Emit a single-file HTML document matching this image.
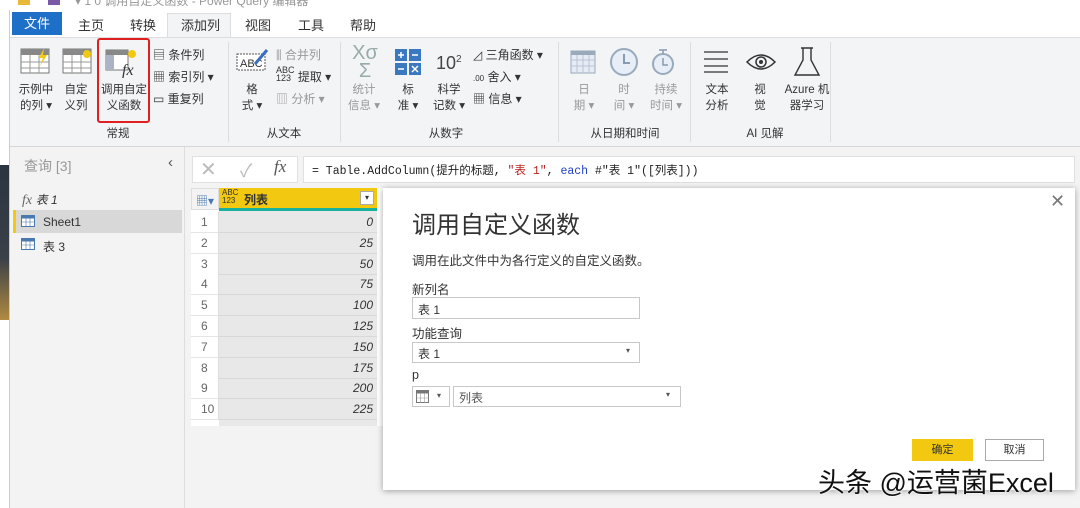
<!DOCTYPE html>
<html><head><meta charset="utf-8"><style>
*{margin:0;padding:0;box-sizing:border-box}
body{width:1080px;height:508px;overflow:hidden;background:#f3f3f3;font-family:"Liberation Sans","Noto Sans CJK SC",sans-serif;position:relative;color:#333}
.a{position:absolute}
.t{font-size:12px;color:#333;white-space:nowrap}
.g{color:#999}
.lbl{font-size:11.5px;text-align:center;line-height:16px;white-space:nowrap}
</style></head><body>
<div class="a" style="left:0;top:0;width:1080px;height:10px;background:#fff"></div>
<div class="a" style="left:18px;top:0;width:12px;height:5px;background:#e6b93a"></div>
<div class="a" style="left:48px;top:0;width:12px;height:5px;background:#7a5aa6"></div>
<div class="a t" style="left:75px;top:-8px;color:#999;font-size:12px">▾ 1 0 调用自定义函数 - Power Query 编辑器</div>
<div class="a" style="left:10px;top:10px;width:1070px;height:27px;background:#fff"></div>
<div class="a" style="left:12px;top:12px;width:50px;height:23px;background:#1e6fc8;color:#fff;font-size:13px;text-align:center;line-height:23px">文件</div>
<div class="a t" style="left:78px;top:15px;font-size:13px">主页</div>
<div class="a t" style="left:130px;top:15px;font-size:13px">转换</div>
<div class="a" style="left:167px;top:13px;width:64px;height:26px;background:#f3f4f6;border:1px solid #ddd;border-bottom:none"></div>
<div class="a t" style="left:181px;top:15px;font-size:13px">添加列</div>
<div class="a t" style="left:245px;top:15px;font-size:13px">视图</div>
<div class="a t" style="left:298px;top:15px;font-size:13px">工具</div>
<div class="a t" style="left:350px;top:15px;font-size:13px">帮助</div>
<div class="a" style="left:0;top:10px;width:10px;height:498px;background:#fff;border-right:1px solid #ccc"></div>
<div class="a" style="left:0;top:165px;width:9px;height:155px;background:linear-gradient(#2a3540,#3a4048 60%,#b08a40)"></div>
<div class="a" style="left:10px;top:37px;width:1070px;height:110px;background:#f3f4f6;border-top:1px solid #ddd;border-bottom:1px solid #d6d6d6"></div>
<div class="a" style="left:228px;top:42px;width:1px;height:100px;background:#ddd"></div>
<div class="a" style="left:340px;top:42px;width:1px;height:100px;background:#ddd"></div>
<div class="a" style="left:558px;top:42px;width:1px;height:100px;background:#ddd"></div>
<div class="a" style="left:690px;top:42px;width:1px;height:100px;background:#ddd"></div>
<div class="a" style="left:830px;top:42px;width:1px;height:100px;background:#ddd"></div>
<svg class="a" style="left:20px;top:48px" width="32" height="28"><rect x="1" y="1" width="28" height="24" fill="#fff" stroke="#777"/><rect x="1" y="1" width="28" height="6" fill="#888"/><path d="M10 7v18M19 7v18M1 14h28M1 20h28" stroke="#999"/><path d="M24 0l-5 10h4l-3 8 7-11h-4z" fill="#f2c811"/></svg>
<svg class="a" style="left:62px;top:48px" width="32" height="28"><rect x="1" y="1" width="28" height="24" fill="#fff" stroke="#777"/><rect x="1" y="1" width="28" height="6" fill="#888"/><path d="M10 7v18M19 7v18M1 14h28M1 20h28" stroke="#999"/><circle cx="25" cy="6" r="4" fill="#f2c811"/></svg>
<svg class="a" style="left:105px;top:48px" width="34" height="30"><rect x="1" y="2" width="22" height="20" fill="#fff" stroke="#777"/><rect x="1" y="2" width="22" height="5" fill="#888"/><rect x="1" y="7" width="8" height="15" fill="#aab4c4"/><circle cx="27" cy="6" r="4" fill="#f2c811"/><text x="17" y="27" font-family="Liberation Serif" font-style="italic" font-size="16" fill="#333">fx</text></svg>
<div class="a" style="left:97px;top:38px;width:53px;height:85px;border:2px solid #e02020;border-radius:3px"></div>
<div class="a lbl" style="left:16px;top:82px;width:40px">示例中<br>的列 ▾</div>
<div class="a lbl" style="left:58px;top:82px;width:36px">自定<br>义列</div>
<div class="a lbl" style="left:98px;top:82px;width:52px">调用自定<br>义函数</div>
<div class="a t" style="left:153px;top:46px">▤ 条件列</div>
<div class="a t" style="left:153px;top:68px">▦ 索引列 ▾</div>
<div class="a t" style="left:153px;top:90px">▭ 重复列</div>
<div class="a lbl" style="left:100px;top:126px;width:36px">常规</div>
<svg class="a" style="left:235px;top:48px" width="34" height="26"><rect x="2" y="6" width="28" height="16" fill="#fff" stroke="#555" stroke-dasharray="2 1"/><text x="5" y="19" font-size="11" fill="#333">ABC</text><path d="M20 16L32 2" stroke="#3a6fc0" stroke-width="3"/></svg>
<div class="a lbl" style="left:238px;top:82px;width:28px">格<br>式 ▾</div>
<div class="a t g" style="left:276px;top:46px">⫼ 合并列</div>
<div class="a t" style="left:276px;top:66px"><span style="font-size:9px;line-height:8px;display:inline-block">ABC<br>123</span> 提取 ▾</div>
<div class="a t g" style="left:276px;top:90px">▥ 分析 ▾</div>
<div class="a lbl" style="left:262px;top:126px;width:44px">从文本</div>
<div class="a" style="left:350px;top:44px;font-size:20px;color:#9aa;line-height:18px;text-align:center;width:30px">Χσ<br>Σ</div>
<svg class="a" style="left:395px;top:49px" width="28" height="26"><rect x="0" y="0" width="12" height="12" fill="#3a78c0"/><rect x="14" y="0" width="12" height="12" fill="#3a78c0"/><rect x="0" y="14" width="12" height="12" fill="#3a78c0"/><rect x="14" y="14" width="12" height="12" fill="#3a78c0"/><path d="M3 6h6M6 3v6M17 6h6M3 20h6M17 17l6 6M23 17l-6 6" stroke="#fff" stroke-width="1.5"/></svg>
<div class="a" style="left:436px;top:53px;font-size:18px;color:#444">10<sup style="font-size:10px">2</sup></div>
<div class="a lbl g" style="left:346px;top:82px;width:36px">统计<br>信息 ▾</div>
<div class="a lbl" style="left:394px;top:82px;width:28px">标<br>准 ▾</div>
<div class="a lbl" style="left:430px;top:82px;width:38px">科学<br>记数 ▾</div>
<div class="a t" style="left:473px;top:46px">◿ 三角函数 ▾</div>
<div class="a t" style="left:473px;top:68px"><span style="font-size:8px">.00</span> 舍入 ▾</div>
<div class="a t" style="left:473px;top:90px">▦ 信息 ▾</div>
<div class="a lbl" style="left:420px;top:126px;width:52px">从数字</div>
<svg class="a" style="left:570px;top:48px" width="28" height="28"><rect x="1" y="3" width="24" height="22" fill="#e6ecf5" stroke="#9ab"/><rect x="1" y="3" width="24" height="4" fill="#9ab"/><path d="M7 7v18M13 7v18M19 7v18M1 12h24M1 18h24" stroke="#b8c4d4"/></svg>
<svg class="a" style="left:609px;top:47px" width="30" height="30"><circle cx="15" cy="15" r="13" fill="#e8eef8" stroke="#9ab" stroke-width="2"/><path d="M15 7v9h6" stroke="#8a9ab0" stroke-width="2" fill="none"/></svg>
<svg class="a" style="left:650px;top:47px" width="26" height="30"><circle cx="13" cy="17" r="10" fill="#e8eef8" stroke="#9ab" stroke-width="2"/><path d="M9 3h8M13 3v4M13 11v7h5" stroke="#8a9ab0" stroke-width="1.5" fill="none"/></svg>
<div class="a lbl g" style="left:570px;top:82px;width:28px">日<br>期 ▾</div>
<div class="a lbl g" style="left:610px;top:82px;width:28px">时<br>间 ▾</div>
<div class="a lbl g" style="left:646px;top:82px;width:40px">持续<br>时间 ▾</div>
<div class="a lbl" style="left:585px;top:126px;width:80px">从日期和时间</div>
<svg class="a" style="left:702px;top:50px" width="28" height="24"><path d="M2 2h24M2 9h24M2 16h24M2 22h24" stroke="#333" stroke-width="1.3"/></svg>
<svg class="a" style="left:745px;top:52px" width="32" height="20"><path d="M2 10Q16 -4 30 10Q16 24 2 10z" fill="none" stroke="#333" stroke-width="1.5"/><circle cx="16" cy="10" r="5" fill="none" stroke="#333" stroke-width="1.5"/><circle cx="16" cy="10" r="2" fill="#333"/></svg>
<svg class="a" style="left:793px;top:46px" width="28" height="32"><path d="M10 2v12L2 29h24L18 14V2M8 2h12" fill="none" stroke="#333" stroke-width="1.4"/></svg>
<div class="a lbl" style="left:701px;top:82px;width:32px">文本<br>分析</div>
<div class="a lbl" style="left:748px;top:82px;width:24px">视<br>觉</div>
<div class="a lbl" style="left:780px;top:82px;width:54px">Azure 机<br>器学习</div>
<div class="a lbl" style="left:735px;top:126px;width:60px">AI 见解</div>
<div class="a" style="left:11px;top:147px;width:174px;height:361px;background:#f3f3f3;border-right:1px solid #ddd"></div>
<div class="a t g" style="left:24px;top:156px;font-size:14px">查询 [3]</div>
<div class="a t" style="left:168px;top:154px;font-size:15px;color:#555">‹</div>
<div class="a t" style="left:22px;top:191px;font-family:'Liberation Serif';font-style:italic;font-size:14px;color:#666">fx <span style="font-family:'Liberation Sans','Noto Sans CJK SC';font-size:12px;color:#333">表 1</span></div>
<div class="a" style="left:13px;top:210px;width:169px;height:23px;background:#d8d8d8;border-left:3px solid #f2c811"></div>
<svg class="a" style="left:21px;top:215px" width="14" height="12"><rect x=".5" y=".5" width="13" height="11" fill="#fff" stroke="#4a78b0"/><rect x=".5" y=".5" width="13" height="3" fill="#4a78b0"/><path d="M5 3v9M9 3v9M0 7h14" stroke="#4a78b0" stroke-width=".6"/></svg>
<div class="a t" style="left:43px;top:215px">Sheet1</div>
<svg class="a" style="left:21px;top:238px" width="14" height="12"><rect x=".5" y=".5" width="13" height="11" fill="#fff" stroke="#4a78b0"/><rect x=".5" y=".5" width="13" height="3" fill="#4a78b0"/><path d="M5 3v9M9 3v9M0 7h14" stroke="#4a78b0" stroke-width=".6"/></svg>
<div class="a t" style="left:43px;top:238px">表 3</div>
<div class="a" style="left:192px;top:156px;width:106px;height:27px;background:#fff;border:1px solid #e0e0e0"></div>
<div class="a" style="left:200px;top:157px;font-size:20px;color:#bbb">✕</div>
<div class="a" style="left:240px;top:157px;font-size:18px;color:#bbb">✓</div>
<div class="a" style="left:274px;top:157px;font-family:'Liberation Serif';font-style:italic;font-size:17px;color:#555">fx</div>
<div class="a" style="left:303px;top:156px;width:772px;height:27px;background:#fff;border:1px solid #e0e0e0"></div>
<div class="a" style="left:312px;top:162px;font-family:'Liberation Mono','Noto Sans CJK SC',monospace;font-size:11.5px;color:#222;white-space:nowrap">= Table.AddColumn(提升的标题, <span style="color:#b22">"表 1"</span>, <span style="color:#2040c0">each</span> #"表 1"([列表]))</div>
<div class="a" style="left:191px;top:188px;width:194px;height:238px;background:#fff"></div>
<div class="a" style="left:191px;top:188px;width:28px;height:22px;background:#f3f3f3;border:1px solid #ddd"></div>
<div class="a t" style="left:196px;top:192px;color:#4a78b0">▦▾</div>
<div class="a" style="left:219px;top:188px;width:158px;height:20px;background:#f2c811"></div>
<div class="a" style="left:219px;top:208px;width:158px;height:3px;background:#19b0a0"></div>
<div class="a" style="left:222px;top:189px;font-size:8px;line-height:8px;color:#333">ABC<br>123</div>
<div class="a t" style="left:244px;top:191px;font-weight:bold">列表</div>
<div class="a" style="left:360px;top:191px;width:14px;height:14px;background:#fff;border:1px solid #aaa;font-size:8px;text-align:center;line-height:12px">▾</div>
<div class="a" style="left:219px;top:211px;width:158px;height:215px;background:#e8e8e8"></div>
<div id="rows"></div>
<script>
var v=[0,25,50,75,100,125,150,175,200,225],h='';
for(var i=0;i<10;i++){var y=212+i*20.8;
h+='<div class="a" style="left:191px;top:'+y+'px;width:28px;height:21px;border-bottom:1px solid #e4e4e4;border-right:1px solid #ddd;background:#fff;color:#666;font-size:12px;line-height:21px;padding-left:10px">'+(i+1)+'</div>';
h+='<div class="a" style="left:219px;top:'+y+'px;width:158px;height:21px;border-bottom:1px solid #d8d8d8;font-style:italic;font-size:12px;line-height:21px;text-align:right;padding-right:4px;color:#333">'+v[i]+'</div>';}
document.getElementById('rows').innerHTML=h;
</script>
<div class="a" style="left:383px;top:188px;width:692px;height:302px;background:#fff;box-shadow:0 1px 6px rgba(0,0,0,.35)"></div>
<div class="a" style="left:1050px;top:191px;font-size:18px;color:#777">✕</div>
<div class="a" style="left:412px;top:205px;font-size:24px;color:#333">调用自定义函数</div>
<div class="a t" style="left:412px;top:250px;font-size:12.5px">调用在此文件中为各行定义的自定义函数。</div>
<div class="a t" style="left:412px;top:279px;font-size:12.5px">新列名</div>
<div class="a" style="left:412px;top:297px;width:228px;height:22px;border:1px solid #c8c8c8"></div>
<div class="a t" style="left:418px;top:301px">表 1</div>
<div class="a t" style="left:412px;top:323px;font-size:12.5px">功能查询</div>
<div class="a" style="left:412px;top:342px;width:228px;height:21px;border:1px solid #c8c8c8"></div>
<div class="a t" style="left:418px;top:345px">表 1</div>
<div class="a" style="left:626px;top:346px;font-size:8px;color:#555">▾</div>
<div class="a t" style="left:412px;top:368px;font-size:12.5px">p</div>
<div class="a" style="left:412px;top:386px;width:38px;height:21px;border:1px solid #c8c8c8"></div>
<svg class="a" style="left:416px;top:390px" width="14" height="13"><rect x=".5" y=".5" width="12" height="12" fill="#fff" stroke="#777"/><rect x=".5" y=".5" width="12" height="3" fill="#777"/><path d="M4.5 3v10M8.5 3v10M0 8h13" stroke="#999" stroke-width=".6"/></svg>
<div class="a" style="left:437px;top:391px;font-size:8px;color:#555">▾</div>
<div class="a" style="left:453px;top:386px;width:228px;height:21px;border:1px solid #c8c8c8"></div>
<div class="a t" style="left:459px;top:389px;color:#555">列表</div>
<div class="a" style="left:666px;top:390px;font-size:8px;color:#555">▾</div>
<div class="a" style="left:912px;top:439px;width:61px;height:22px;background:#f2c811;font-size:11px;text-align:center;line-height:22px;color:#333">确定</div>
<div class="a" style="left:985px;top:439px;width:59px;height:22px;background:#fff;border:1px solid #aaa;font-size:11px;text-align:center;line-height:20px;color:#333">取消</div>
<div class="a" style="left:818px;top:461px;font-size:27px;color:#111;white-space:nowrap;text-shadow:0 0 2px #fff,0 0 2px #fff">头条 @运营菌Excel</div>
</body></html>
